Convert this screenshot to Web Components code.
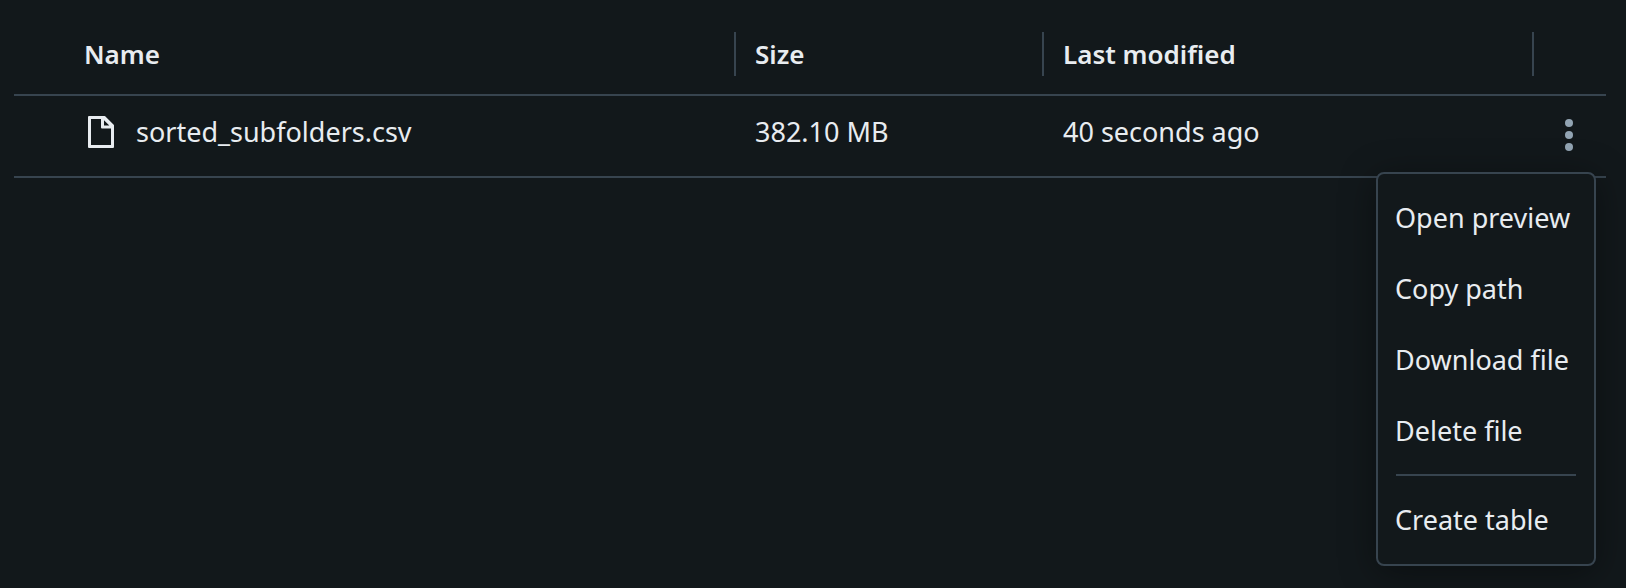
<!DOCTYPE html>
<html lang="en">
<head>
<meta charset="utf-8">
<title>Files</title>
<style>
    body {
        --bg: #12181b;
        --line: #37444f;
        --text: #e8ecf0;
        --muted: #92a4b3;
        background: var(--bg);
        box-sizing: border-box;
        color: var(--text);
        font: 27px/40px "Noto Sans", "Open Sans", sans-serif;
        margin: 0;
        min-height: 100vh;
        padding: 14px 20px 14px 14px;
    }
</style>
</head>
<body>
<file-table>
    <file-icon slot="icon"></file-icon>
    <span slot="name">sorted_subfolders.csv</span>
    <span slot="size">382.10 MB</span>
    <span slot="modified">40 seconds ago</span>
    <row-menu slot="actions">
        <menu-item>Open preview</menu-item>
        <menu-item>Copy path</menu-item>
        <menu-item>Download file</menu-item>
        <menu-item>Delete file</menu-item>
        <menu-separator></menu-separator>
        <menu-item>Create table</menu-item>
    </row-menu>
</file-table>

<script>
function makeTemplate(html) {
    const template = document.createElement('template')
    template.innerHTML = html
    return template
}

// base class: clones the template of the subclass into an open shadow root
class BaseComponent extends HTMLElement {
    constructor() {
        super();
        this.attachShadow({mode: 'open'});
        this.shadowRoot.appendChild(this.constructor.template.content.cloneNode(true));
    }
}

class FileTable extends BaseComponent {
    static template = makeTemplate(`<style>
        :host {
            display: block;
        }
        table {
            border-collapse: separate;
            border-spacing: 0;
            table-layout: fixed;
            width: 100%;
        }
        .size { width: 308px; }
        .modified { width: 490px; }
        .actions { width: 72px; }
        th, td {
            border-bottom: 2px solid var(--line);
            height: 80px;
            padding: 0;
            text-align: left;
            vertical-align: middle;
        }
        th {
            font-size: 26px;
            font-weight: 600;
        }
        .label {
            border-right: 2px solid var(--line);
            line-height: 44px;
            padding-left: 19px;
        }
        th:last-child .label {
            border: 0;
            padding: 0;
            height: 44px;
        }
        th:first-child .label {
            padding-left: 70px;
        }
        .cell {
            padding: 0 19px 8px;
        }
        .file {
            align-items: center;
            display: flex;
            gap: 22px;
            padding-left: 74px;
        }
    </style>
    <table>
        <colgroup><col><col class="size"><col class="modified"><col class="actions"></colgroup>
        <thead>
            <tr>
                <th scope="col"><div class="label">Name</div></th>
                <th scope="col"><div class="label">Size</div></th>
                <th scope="col"><div class="label">Last modified</div></th>
                <th scope="col"><div class="label"></div></th>
            </tr>
        </thead>
        <tbody>
            <tr>
                <td><div class="cell file"><slot name="icon"></slot><slot name="name"></slot></div></td>
                <td><div class="cell"><slot name="size"></slot></div></td>
                <td><div class="cell"><slot name="modified"></slot></div></td>
                <td><slot name="actions"></slot></td>
            </tr>
        </tbody>
    </table>`)
}

class FileIcon extends BaseComponent {
    static template = makeTemplate(`<style>
        :host {
            color: var(--text);
            display: block;
        }
        svg {
            display: block;
        }
    </style>
    <svg width="26" height="32" viewBox="0 0 26 32" fill="currentColor" fill-rule="evenodd" aria-hidden="true">
        <path d="M0 1a1 1 0 0 1 1-1h15.500a1 1 0 0 1 .7.3l8.500 8.500a1 1 0 0 1 .3.7V31a1 1 0 0 1-1 1H1a1 1 0 0 1-1-1zM3 3v26h20V12.500h-9a1 1 0 0 1-1-1V3zM16 4.200V9.500h5.300z"/>
    </svg>`)
}

class RowMenu extends BaseComponent {
    static template = makeTemplate(`<style>
        :host {
            display: block;
            position: relative;
            z-index: 1;
        }
        .toggle {
            background: none;
            border: 0;
            color: var(--muted);
            cursor: pointer;
            display: flex;
            height: 80px;
            align-items: center;
            justify-content: center;
            padding: 0 2px 2px 0;
            width: 100%;
        }
        .menu {
            background: var(--bg);
            border: 2px solid var(--line);
            border-radius: 8px;
            box-shadow: 0 6px 36px rgba(0, 0, 0, 0.4);
            box-sizing: border-box;
            padding: 8px 0 9px;
            position: absolute;
            right: 10px;
            top: 76px;
            width: 220px;
        }
        .menu[hidden] {
            display: none;
        }
    </style>
    <button class="toggle" type="button" aria-label="File actions" aria-haspopup="menu" aria-expanded="true">
        <svg width="8" height="32" viewBox="0 0 8 32" fill="currentColor" aria-hidden="true">
            <circle cx="4" cy="4" r="4"/>
            <circle cx="4" cy="16" r="4"/>
            <circle cx="4" cy="28" r="4"/>
        </svg>
    </button>
    <div class="menu" role="menu"><slot></slot></div>`)

    connectedCallback() {
        const toggle = this.shadowRoot.querySelector('.toggle')
        const menu = this.shadowRoot.querySelector('.menu')
        toggle.addEventListener('click', () => {
            menu.hidden = !menu.hidden
            toggle.setAttribute('aria-expanded', String(!menu.hidden))
        })
    }
}

class MenuItem extends BaseComponent {
    static template = makeTemplate(`<style>
        :host {
            display: block;
        }
        button {
            background: none;
            border: 0;
            color: inherit;
            cursor: pointer;
            display: block;
            font: inherit;
            height: 71px;
            padding: 0 17px;
            text-align: left;
            white-space: nowrap;
            width: 100%;
        }
        button:hover {
            background: rgba(255, 255, 255, 0.05);
        }
    </style>
    <button type="button" role="menuitem"><slot></slot></button>`)
}

class MenuSeparator extends BaseComponent {
    static template = makeTemplate(`<style>
        :host {
            background: var(--line);
            display: block;
            height: 2px;
            margin: 8px 18px;
        }
    </style>`)
}

window.customElements.define('file-table', FileTable)
window.customElements.define('file-icon', FileIcon)
window.customElements.define('row-menu', RowMenu)
window.customElements.define('menu-item', MenuItem)
window.customElements.define('menu-separator', MenuSeparator)
</script>
</body>
</html>
